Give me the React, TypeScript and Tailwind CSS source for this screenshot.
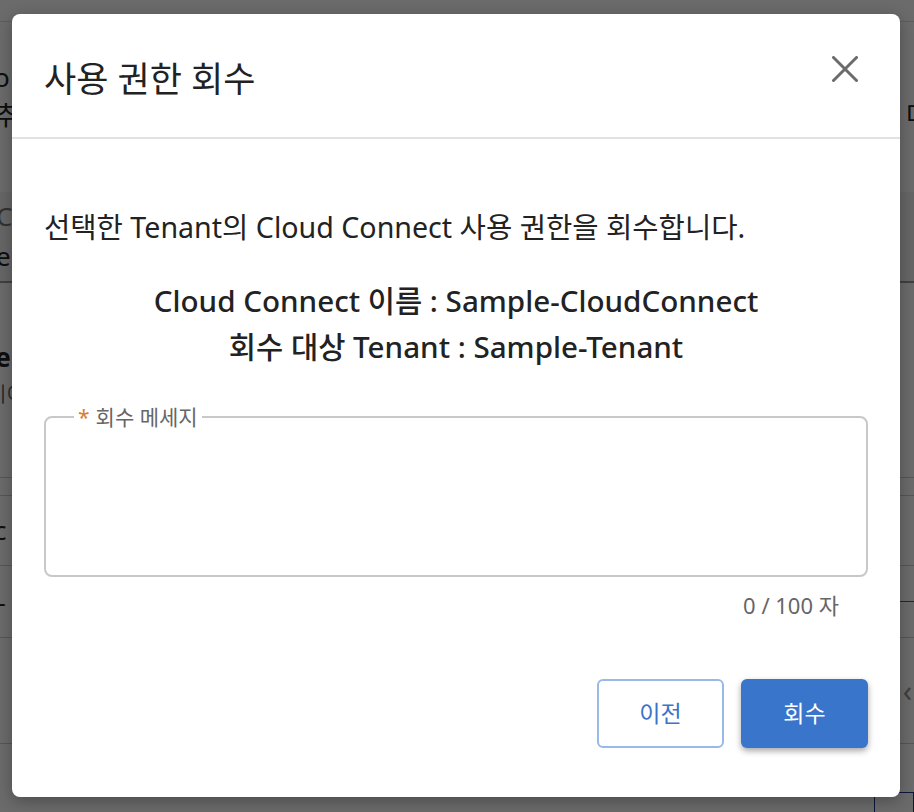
import React from "react";

const FONT = '"Noto Sans", "Noto Sans CJK KR", sans-serif';

function Background() {
  return (
    <div className="w-[914px] h-[812px] bg-white text-[#222] overflow-hidden" style={{ fontFamily: FONT }}>
      <div className="h-[22px] border-b border-[#ddd]" />
      <div className="h-[120px] flex justify-between items-start pt-[36px]">
        <div className="flex flex-col text-[26px] leading-[38px] -ml-[6px]">
          <span>o</span>
          <span>추</span>
        </div>
        <div className="text-[26px] leading-[38px] pt-[38px] -mr-[16px]">다</div>
      </div>
      <div className="h-[50px]" />
      <div className="h-[91px] bg-[#f2f2f2] border-b-2 border-[#999] flex flex-col text-[26px] leading-[40px] pt-[4px] -ml-[4px]">
        <span className="text-[#777]">C</span>
        <span>e</span>
      </div>
      <div className="h-[195px] border-b border-[#ccc] flex flex-col pt-[56px] -ml-[18px]">
        <span className="text-[26px] font-bold leading-[36px]">Ter</span>
        <span className="text-[20px] text-[#666] leading-[40px] ml-[6px]">이이</span>
      </div>
      <div className="h-[18px] border-b border-[#ccc]" />
      <div className="h-[70px] border-b border-[#ccc] flex items-center text-[26px] -ml-[6px]">c</div>
      <div className="h-[72px] border-b border-[#ccc] flex items-center justify-between text-[24px]">
        <span className="-ml-[2px]">-</span>
        <span className="w-[30px] border-t border-[#c33]" />
      </div>
      <div className="h-[106px] border-b border-[#ccc] flex items-center justify-end pr-[2px] text-[30px] text-[#999]">‹</div>
      <div className="flex justify-end">
        <div className="w-[40px] h-[30px] border border-[#1e3a8a] mt-[48px]" />
      </div>
    </div>
  );
}

export default function App() {
  return (
    <div className="relative w-[914px] h-[812px] overflow-hidden">
      <Background />
      <div className="absolute inset-0 bg-black/[0.58] pl-[12px] pt-[14px]" style={{ fontFamily: FONT }}>
        <div className="w-[888px] h-[783px] bg-white rounded-[8px] shadow-[0_4px_16px_rgba(0,0,0,0.3)] flex flex-col">
          <div className="h-[125px] flex items-center justify-between pl-[32px] pr-[42px] border-b-2 border-[#e2e2e2]">
            <h1 className="text-[35px] text-[#222] font-normal leading-none mt-[6px]">사용 권한 회수</h1>
            <svg width="26" height="26" viewBox="0 0 26 26" className="mb-[14px]">
              <path d="M1.5 1.5 L24.5 24.5 M24.5 1.5 L1.5 24.5" stroke="#6b6b6b" strokeWidth="3" strokeLinecap="round" />
            </svg>
          </div>
          <div className="flex flex-col px-[32px]">
            <p className="mt-[70px] text-[28.6px] leading-[36px] text-[#222] whitespace-nowrap">
              선택한 Tenant의 Cloud Connect 사용 권한을 회수합니다.
            </p>
            <div className="mt-[33px] flex flex-col items-center text-[29.6px] leading-[46px] font-medium text-[#222] whitespace-nowrap">
              <span>Cloud Connect 이름 : Sample-CloudConnect</span>
              <span>회수 대상 Tenant : Sample-Tenant</span>
            </div>
            <fieldset className="mt-[35px] h-[172px] border-2 border-[#c8c8c8] rounded-[8px] px-[28px]">
              <legend className="px-[4px] text-[21px] leading-[24px] text-[#666]">
                <span className="text-[#e07b28] mr-[6px]">*</span>회수 메세지
              </legend>
            </fieldset>
            <div className="mt-[14px] text-right pr-[29px] text-[22px] leading-[28px] text-[#666]">0 / 100 자</div>
            <div className="mt-[60px] flex justify-end gap-[17px]">
              <button className="w-[127px] h-[69px] rounded-[6px] border-2 border-[#99b9e8] bg-white text-[23px] text-[#3a73c9]">
                이전
              </button>
              <button className="w-[127px] h-[69px] rounded-[6px] bg-[#3a75cc] text-[23px] text-white shadow-[0_3px_6px_rgba(0,0,0,0.35)]">
                회수
              </button>
            </div>
          </div>
        </div>
      </div>
    </div>
  );
}
